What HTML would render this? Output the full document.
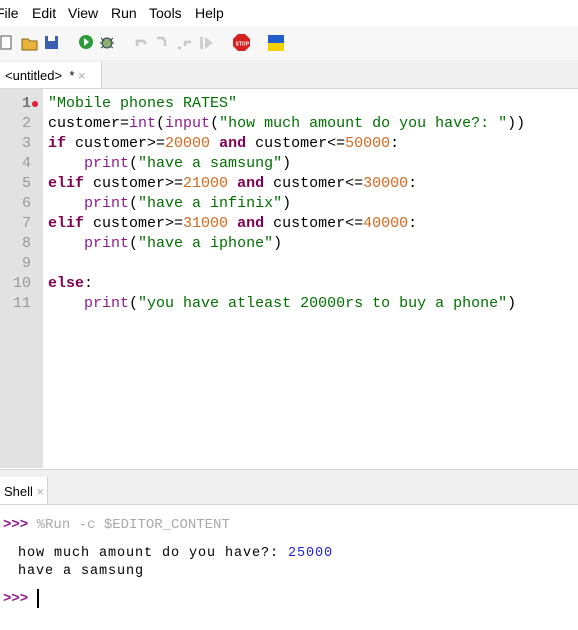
<!DOCTYPE html>
<html><head><style>
body{margin:0;width:578px;height:629px;overflow:hidden;background:#f0f0f0;font-family:"Liberation Sans",sans-serif;position:relative}
.abs{position:absolute}
.menu{top:0;left:0;width:578px;height:26px;background:#fff;font-size:14px}
.menu span{position:absolute;top:5px}
.tb{top:26px;left:0;width:578px;height:34px;background:#f7f7f7}
.code{font-family:"Liberation Mono",monospace;font-size:15px;line-height:20px;white-space:pre}
.s{color:#007000}.k{color:#7f0055;font-weight:bold}.b{color:#8e1b8e}.n{color:#d2691e}
.sh{font-family:"Liberation Mono","Courier New",monospace;font-size:13.5px;white-space:pre;letter-spacing:0.9px}
</style></head><body>
<div class="abs menu"><span style="left:-4px">File</span><span style="left:32px">Edit</span><span style="left:68px">View</span><span style="left:111px">Run</span><span style="left:149px">Tools</span><span style="left:195px">Help</span></div>
<div class="abs tb">
<svg width="300" height="34" style="position:absolute;left:0;top:0">
<rect x="1" y="10" width="10" height="13" fill="#fff" stroke="#555"/>
<path d="M22 13h6l2 2h7v9H22z" fill="#e8b53a" stroke="#8a6414"/>
<rect x="45" y="10" width="13" height="13" fill="#3a5fb0"/><rect x="48" y="10" width="7" height="5" fill="#fff"/>
<circle cx="86" cy="16" r="7" fill="#2c9a3a"/><path d="M84 12l5 4-5 4z" fill="#fff"/>
<circle cx="107" cy="17" r="5" fill="#8bb070" stroke="#345"/><path d="M101 12l3 3M113 12l-3 3M100 17h3M114 17h-3M101 22l3-2M113 22l-3-2" stroke="#345"/>
<g fill="none" stroke="#c8c8c8" stroke-width="2.5"><path d="M137 20v-5h7l2 3"/><path d="M157 12h6l2 3v5"/><path d="M178 22h3M185 20v-4h6"/></g>
<path d="M200 11h3v12h-3zM205 11l8 6-8 6z" fill="#cfcfcf"/>
<polygon points="238,8 245,8 250,13 250,20 245,25 238,25 233,20 233,13" fill="#d42020"/><text x="235.5" y="19.5" font-size="5" fill="#fff" font-weight="bold" font-family="Liberation Sans">STOP</text>
<rect x="268" y="9" width="16" height="8" fill="#1f5fcc"/><rect x="268" y="17" width="16" height="8" fill="#f5cf00"/>
</svg></div>
<div class="abs" style="top:62px;left:0;width:101px;height:27px;background:#fff;border-right:1px solid #d0d0d0;font-size:13px"><span style="position:absolute;left:5px;top:6px">&lt;untitled&gt; &nbsp;* <span style="color:#aaa">×</span></span></div>
<div class="abs" style="top:88px;left:0;width:578px;height:380px;background:#fff;border-top:1px solid #d8d8d8;border-bottom:1px solid #d8d8d8"></div>
<div class="abs" style="top:89px;left:0;width:43px;height:379px;background:#e2e2e2"></div>
<div class="abs code" style="top:94px;left:0;width:31px;text-align:right;color:#999"><b style="color:#777">1</b>
2
3
4
5
6
7
8
9
10
11</div>
<div class="abs" style="top:101px;left:32px;width:6px;height:6px;border-radius:3px;background:#e0203a"></div>
<div class="abs code" style="top:94px;left:48px"><span class="s">"Mobile phones RATES"</span>
customer=<span class="b">int</span>(<span class="b">input</span>(<span class="s">"how much amount do you have?: "</span>))
<span class="k">if</span> customer&gt;=<span class="n">20000</span> <span class="k">and</span> customer&lt;=<span class="n">50000</span>:
    <span class="b">print</span>(<span class="s">"have a samsung"</span>)
<span class="k">elif</span> customer&gt;=<span class="n">21000</span> <span class="k">and</span> customer&lt;=<span class="n">30000</span>:
    <span class="b">print</span>(<span class="s">"have a infinix"</span>)
<span class="k">elif</span> customer&gt;=<span class="n">31000</span> <span class="k">and</span> customer&lt;=<span class="n">40000</span>:
    <span class="b">print</span>(<span class="s">"have a iphone"</span>)

<span class="k">else</span>:
    <span class="b">print</span>(<span class="s">"you have atleast 20000rs to buy a phone"</span>)</div>
<div class="abs" style="top:477px;left:0;width:47px;height:27px;background:#fff;border-right:1px solid #d0d0d0;font-size:13px"><span style="position:absolute;left:4px;top:7px">Shell <span style="color:#aaa">×</span></span></div>
<div class="abs" style="top:504px;left:0;width:578px;height:125px;background:#fff;border-top:1px solid #d8d8d8"></div>
<div class="abs code" style="top:515px;left:3px;font-size:14px"><span style="color:#8e1b8e;font-weight:bold">&gt;&gt;&gt;</span> <span style="color:#aaa">%Run -c $EDITOR_CONTENT</span></div>
<div class="abs sh" style="top:545px;left:18px;line-height:18px">how much amount do you have?: <span style="color:#2020e0">25000</span>
have a samsung</div>
<div class="abs code" style="top:589px;left:3px;font-size:14px"><span style="color:#8e1b8e;font-weight:bold">&gt;&gt;&gt;</span></div>
<div class="abs" style="top:589px;left:37px;width:2px;height:19px;background:#000"></div>
</body></html>
